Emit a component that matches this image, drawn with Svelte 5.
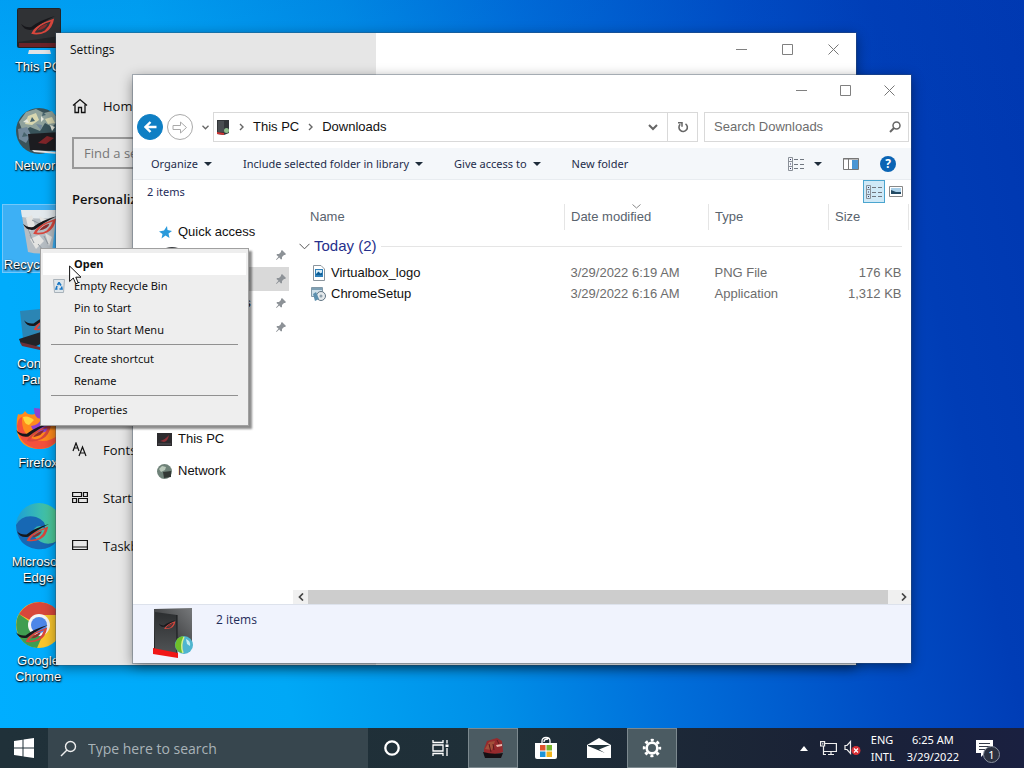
<script>
  const desktop = [
    { label: 'This PC', icon: 'pc' },
    { label: 'Network', icon: 'globe' },
    { label: 'Recycle Bin', icon: 'bin', selected: true },
    { label: 'Control Panel', icon: 'panel' },
    { label: 'Firefox', icon: 'firefox' },
    { label: 'Microsoft Edge', icon: 'edge' },
    { label: 'Google Chrome', icon: 'chrome' },
  ];
  const settingsNav = [
    { label: 'Fonts', icon: 'fonts' },
    { label: 'Start', icon: 'start' },
    { label: 'Taskbar', icon: 'taskbar' },
  ];
  const commands = [
    { label: 'Organize', menu: true },
    { label: 'Include selected folder in library', menu: true },
    { label: 'Give access to', menu: true },
    { label: 'New folder', menu: false },
  ];
  const pinned = [
    { label: 'Desktop', active: false },
    { label: 'Downloads', active: true },
    { label: 'Documents', active: false },
    { label: 'Pictures', active: false },
  ];
  const files = [
    { name: 'Virtualbox_logo', date: '3/29/2022 6:19 AM', type: 'PNG File', size: '176 KB', icon: 'image' },
    { name: 'ChromeSetup', date: '3/29/2022 6:16 AM', type: 'Application', size: '1,312 KB', icon: 'setup' },
  ];
  const menu = [
    [
      { label: 'Open', primary: true },
      { label: 'Empty Recycle Bin', icon: true },
      { label: 'Pin to Start' },
      { label: 'Pin to Start Menu' },
    ],
    [{ label: 'Create shortcut' }, { label: 'Rename' }],
    [{ label: 'Properties' }],
  ];
</script>

{#snippet rogEye(x, y, s)}
  <g transform="translate({x} {y}) scale({s})">
    <path d="M12 21Q16 12 26 8L39 3Q37 15 29 19Q21 23 12 21ZM16 19.5Q24 20 28 17Q33 13 35 6.500Q22 10 16 19.500Z" fill="#d8463c" fill-rule="evenodd" />
    <path d="M0 9Q5 14 12 13Q22 5 40 0Q24 8 14 16Q4 18 0 9Z" fill="#17171b" />
    <path d="M19 17Q23 11 31 9Q30 15 19 17Z" fill="#8d2c2c" />
  </g>
{/snippet}

{#snippet caption()}
  <div class="caption">
    <button aria-label="Minimize"><svg width="11" height="11" viewBox="0 0 11 11"><path d="M0 5.5H11" stroke="#808080" /></svg></button>
    <button aria-label="Maximize"><svg width="11" height="11" viewBox="0 0 11 11"><path d="M.5.5H10.5V10.5H.5Z" fill="none" stroke="#808080" /></svg></button>
    <button aria-label="Close"><svg width="11" height="11" viewBox="0 0 11 11"><path d="M.5.5L10.5 10.5M10.5.5L.5 10.5" stroke="#777" /></svg></button>
  </div>
{/snippet}

{#snippet detailsIcon()}
  <svg width="17" height="14" viewBox="0 0 17 14" fill="none">
    <path d="M.5.5H4.5V13.5H.5ZM.5 4.5H4.5M.5 9.5H4.5" stroke="#8a9098" />
    <path d="M2 2.5H3M2 7H3M2 11.5H3" stroke="#336" />
    <path d="M6 2.5H10M12 2.5H16M6 7.5H10M12 7.5H16M6 11.5H10M12 11.5H16" stroke="#707780" />
  </svg>
{/snippet}

<div class="screen">
  <main class="desktop">
    <ul class="icons">
      {#each desktop as d}
        <li>
          <button class="shortcut" class:selected={d.selected}>
            <svg width="48" height="48" viewBox="0 0 48 48">
              {#if d.icon === 'pc'}
                <path d="M15 42H36L37 46H14Z" fill="#dfe3e6" />
                <rect x="3" y="0" width="44" height="40" rx="2" fill="#222427" />
                <path d="M4 1H46V28L4 34Z" fill="#303235" />
                <rect x="5" y="35" width="40" height="4" fill="#6c2429" />
                {@render rogEye(7, 8, 0.85)}
              {:else if d.icon === 'globe'}
                <circle cx="25" cy="24" r="23" fill="#39535a" />
                <path d="M5 15L12 5L22 2L30 6L38 4L45 13L38 20L31 16L26 24L16 20L9 25Z" fill="#8fa29c" />
                <path d="M14 9L22 6L25 13L18 18L11 17ZM31 12L38 10L41 16L34 17Z" fill="#d8d7b0" />
                <path d="M9 15L13 12L15 16ZM27 9L30 12L27 15ZM36 18L41 20L38 24Z" fill="#e6e9dd" />
                <path d="M4 22L13 20L17 28L12 36L5 32ZM22 17L28 18L27 23Z" fill="#71889a" />
                <path d="M18 10L21 14L16 15ZM29 5L32 8L28 9ZM10 25L14 29L8 30Z" fill="#46636c" />
                <path d="M14 27L47 25L47 44L16 43Z" fill="#1c1c20" />
                <path d="M18 43L44 45V47L20 45Z" fill="#e5e5e5" />
                <path d="M24 36L33 29L40 31L32 37Z" fill="#7f2529" />
              {:else if d.icon === 'bin'}
                <path d="M7 4H43L38 46Q26 49 14 46Z" fill="#b6bdc3" />
                <path d="M7 4H43L42 11Q25 14 8 11Z" fill="#e3e9ed" />
                <path d="M12 12L18 9L21 20L15 26ZM25 10L33 14L29 22ZM16 33L25 29L30 35L22 43ZM31 27L38 31L35 40Z" fill="#e4e4e2" />
                <path d="M18 14L26 18M30 30L34 38M16 29L20 37M24 38L29 44M13 20L17 30" stroke="#8f979e" />
                {@render rogEye(9, 10, 0.85)}
              {:else if d.icon === 'panel'}
                <path d="M6 6L46 2V30L9 34Z" fill="#2b85b4" />
                <path d="M5 34L30 26L46 30L20 42L7 39Z" fill="#222328" />
                <path d="M6 37L26 42V45L8 41Z" fill="#6b3039" />
                {@render rogEye(10, 8, 0.8)}
              {:else if d.icon === 'firefox'}
                <path d="M4 10Q8 12 11 7Q14 12 21 10Q31 1 43 11Q50 20 46 32Q40 46 23 45Q5 43 3 27Q2 16 4 10Z" fill="#ff8a1c" />
                <path d="M3 22Q5 42 24 45Q41 45 46 30Q32 41 20 35Q7 31 8 13Q4 14 3 22Z" fill="#f4503c" />
                <path d="M20 4Q31 4 36 12Q40 23 31 28Q20 31 17 22Q25 21 27 15Q20 15 20 4Z" fill="#8e43d0" />
                <path d="M9 13Q14 11 20 16L15 21Q10 20 9 13Z" fill="#ffd43c" />
                {@render rogEye(2, 18, 0.9)}
              {:else if d.icon === 'edge'}
                <defs>
                  <linearGradient id="edgeTop" x1="0" x2="1"><stop offset="0" stop-color="#1c9fd8" /><stop offset="1" stop-color="#58d58a" /></linearGradient>
                </defs>
                <circle cx="25" cy="23" r="23" fill="url(#edgeTop)" />
                <path d="M2 22Q8 11 22 14Q33 18 31 26Q25 20 20 26Q17 34 27 39Q35 43 43 38Q35 48 22 46Q3 43 2 22Z" fill="#1768b4" />
                {@render rogEye(3, 21, 0.8)}
              {:else}
                <circle cx="25" cy="23" r="23" fill="#f9c62c" />
                <path d="M25 23L5 12Q13 0 26 0Q40 1 46 13H26Z" fill="#d8473b" />
                <path d="M5 12Q-1 23 6 36Q12 45 23 46L30 30Z" fill="#3f9d50" />
                <circle cx="25" cy="23" r="11" fill="#f5f5f5" />
                <circle cx="25" cy="23" r="8" fill="#4d86e8" />
                {@render rogEye(2, 23, 0.8)}
              {/if}
            </svg>
            <span>{d.label}</span>
          </button>
        </li>
      {/each}
    </ul>

    <section class="window settings" aria-label="Settings">
      <div class="pane">
        <h1>Settings</h1>
        <a class="nav home" href="#home">
          <svg width="16" height="16" viewBox="0 0 16 16" fill="none"><path d="M1 7.5L8 1.5L15 7.5M3 6.5V14.5H6.5V9.5H9.5V14.5H13V6.5" stroke="#111" stroke-width="1.3" /></svg>
          Home
        </a>
        <input class="find" aria-label="Find a setting" placeholder="Find a setting" />
        <h2>Personalization</h2>
        <nav class="rest">
          {#each settingsNav as n}
            <a class="nav" href="#{n.icon}">
              <svg width="16" height="16" viewBox="0 0 16 16" fill="none" stroke="#111" stroke-width="1.2">
                {#if n.icon === 'fonts'}
                  <path d="M1 9L4 1L7 9M2 6H6M7 14L10.5 5L14 14M8 11H13" />
                {:else if n.icon === 'start'}
                  <path d="M.6 2.5H9.5V6.5H.6ZM11.5 2.5H15.4V6.5H11.5ZM.6 8.5H4.5V12.5H.6ZM6.5 8.5H15.4V12.5H6.5Z" />
                {:else}
                  <path d="M.6 2.5H15.4V11.5H.6ZM.6 9H15.4" />
                {/if}
              </svg>
              {n.label}
            </a>
          {/each}
        </nav>
      </div>
      <div class="content">{@render caption()}</div>
    </section>

    <section class="window explorer" aria-label="Downloads">
      {@render caption()}
      <div class="address">
        <button class="round back" aria-label="Back"><svg width="13" height="12" viewBox="0 0 13 12" fill="none"><path d="M12.5 6H1.5M6.5 1L1.5 6L6.5 11" stroke="#fff" stroke-width="2.4" /></svg></button>
        <button class="round" aria-label="Forward"><svg width="16" height="13" viewBox="0 0 16 13" fill="none"><path d="M1 4.5H8.5V1L14.5 6.5L8.5 12V8.5H1Z" stroke="#aaa" /></svg></button>
        <button class="recent" aria-label="Recent locations"><svg width="7" height="5" viewBox="0 0 7 5" fill="none"><path d="M.5.8L3.5 3.8L6.5.8" stroke="#666" stroke-width="1.3" /></svg></button>
        <div class="crumbs">
          <svg width="14" height="17" viewBox="0 0 14 17"><path d="M1 1H13V14L8 16L1 15Z" fill="#333639" /><path d="M2 2H8V13H2Z" fill="#4a4e51" /><path d="M1 13L8 14V16L1 15Z" fill="#c33" /><circle cx="10.5" cy="11.5" r="2.5" fill="#8fbf8d" /></svg>
          <svg width="5" height="8" viewBox="0 0 5 8" fill="none"><path d="M1 1L4 4L1 7" stroke="#666" stroke-width="1.4" /></svg>
          <a href="#thispc">This PC</a>
          <svg width="5" height="8" viewBox="0 0 5 8" fill="none"><path d="M1 1L4 4L1 7" stroke="#666" stroke-width="1.4" /></svg>
          <a href="#downloads">Downloads</a>
          <button class="drop" aria-label="Previous locations"><svg width="10" height="7" viewBox="0 0 10 7" fill="none"><path d="M1 1L5 5L9 1" stroke="#666" stroke-width="2" /></svg></button>
          <button class="refresh" aria-label="Refresh"><svg width="12" height="12" viewBox="0 0 12 12" fill="none"><path d="M8.500 2.800A4.200 4.200 0 1 1 3.200 3.300" stroke="#666" stroke-width="1.600" /><path d="M1 1.800H5V5.800" stroke="#666" stroke-width="1.500" /></svg></button>
        </div>
        <label class="search">
          <input aria-label="Search Downloads" placeholder="Search Downloads" />
          <svg width="12" height="12" viewBox="0 0 12 12" fill="none"><circle cx="7.5" cy="4.5" r="3.5" stroke="#666" stroke-width="1.5" /><path d="M5 7L1 11" stroke="#666" stroke-width="2" /></svg>
        </label>
      </div>
      <div class="toolbar">
        {#each commands as c}
          <button>{c.label}{#if c.menu}<i class="tri"></i>{/if}</button>
        {/each}
        <button class="push" aria-label="Change view">{@render detailsIcon()}<i class="tri"></i></button>
        <button aria-label="Preview pane"><svg width="16" height="12" viewBox="0 0 16 12"><path d="M.5.5H15.5V11.5H.5Z" fill="#fff" stroke="#777" /><path d="M0 1H16M5.5 1V12" stroke="#777" /><path d="M9 2H15V11H9Z" fill="#4b96d4" /></svg></button>
        <button class="help" aria-label="Help">?</button>
      </div>
      <div class="summary">
        <span>2 items</span>
        <button class="view on" aria-label="Details view">{@render detailsIcon()}</button>
        <button class="view" aria-label="Thumbnail view"><svg width="14" height="11" viewBox="0 0 14 11"><path d="M.5.5H13.5V10.5H.5Z" fill="#fff" stroke="#888" /><path d="M2 2H12V8H2Z" fill="#a9cfe8" /><path d="M2 4L7 6H12V8H2Z" fill="#234a63" /></svg></button>
      </div>
      <div class="body">
        <nav class="tree">
          <a class="root" href="#quick"><svg width="13" height="13" viewBox="0 0 13 13"><path d="M8 0L8.5 4L13 5L9.5 7.5L10.5 12L6.5 9.5L2.5 12.5L3.5 8L0 5.5L5 4.5Z" fill="#2a9adb" /></svg>Quick access</a>
          {#each pinned as p}
            <a class="pin" class:active={p.active} href="#{p.label}">
              <svg width="15" height="17" viewBox="0 0 15 17"><path d="M2 1Q8 -1 14 1V14L8 16H2Z" fill="#3a3d40" /></svg>
              <span>{p.label}</span>
              <svg width="10" height="10" viewBox="0 0 10 10"><path d="M6 0L10 4L9 5H8L6 7V9L5 9.5L3.2 7.5L.5 10L0 9.5L2.5 6.8L.5 5L1 4H3L5 2V1Z" fill="#8d9297" /></svg>
            </a>
          {/each}
          <div class="lower">
            <a class="root" href="#pc"><svg width="15" height="15" viewBox="0 0 15 15"><path d="M0 1H15V14H0Z" fill="#2c2b2e" /><path d="M3 9Q8 8 12 3Q11 9 7 10Z" fill="#8f3138" /><path d="M1 12H14" stroke="#56565a" /></svg>This PC</a>
            <a class="root" href="#network"><svg width="15" height="15" viewBox="0 0 15 15"><circle cx="7.5" cy="7.5" r="7.5" fill="#6f8279" /><path d="M2 5L5 2L9 3L8 6L4 8Z" fill="#b9c8ba" /><path d="M6 8L14 7V13L7 14Z" fill="#333936" /></svg>Network</a>
          </div>
        </nav>
        <div class="list">
          <table>
            <colgroup><col /><col class="c-date" /><col class="c-type" /><col class="c-size" /></colgroup>
            <thead>
              <tr><th>Name</th><th>Date modified<svg class="sort" width="9" height="5" viewBox="0 0 9 5" fill="none"><path d="M.5.5L4.5 4L8.5.5" stroke="#888" /></svg></th><th>Type</th><th>Size</th></tr>
            </thead>
            <tbody>
              <tr class="group"><td colspan="4"><div><svg width="11" height="7" viewBox="0 0 11 7" fill="none"><path d="M.5.8L5.5 5.8L10.5.8" stroke="#555" /></svg>Today (2)</div></td></tr>
              {#each files as f}
                <tr>
                  <td>
                    <div class="name">
                      {#if f.icon === 'image'}
                        <svg width="15" height="16" viewBox="0 0 15 16"><path d="M2.5.5H10L13.5 4V15.5H2.5Z" fill="#fff" stroke="#8a949c" /><path d="M4 4H12V12H4Z" fill="#2f7fb8" /><path d="M5 5H11V8L9.500 9L7.500 7.500L5 10Z" fill="#d5ebf7" /><path d="M6 8L7.500 6.500L9.500 8.500L11 7.500V10H5V9Z" fill="#0c5c94" /></svg>
                      {:else}
                        <svg width="15" height="16" viewBox="0 0 15 16"><path d="M.5 1.5H11.5V10.5H.5Z" fill="#cfe0ea" stroke="#8299a8" /><path d="M1 2H11V4H1Z" fill="#7fa0b4" /><circle cx="10" cy="10" r="4.5" fill="#e4e9ec" stroke="#607482" /><path d="M2 8L5 6L8 13L4 15Z" fill="#5c8fae" /><circle cx="10" cy="10" r="1.5" fill="#8fa0ac" /></svg>
                      {/if}
                      {f.name}
                    </div>
                  </td>
                  <td>{f.date}</td><td>{f.type}</td><td>{f.size}</td>
                </tr>
              {/each}
            </tbody>
          </table>
          <div class="hscroll">
            <button aria-label="Scroll left"><svg width="6" height="8" viewBox="0 0 6 8" fill="none"><path d="M5 .5L1.5 4L5 7.5" stroke="#444" stroke-width="1.7" /></svg></button>
            <div class="thumb"></div>
            <button aria-label="Scroll right"><svg width="6" height="8" viewBox="0 0 6 8" fill="none"><path d="M1 .5L4.5 4L1 7.5" stroke="#444" stroke-width="1.7" /></svg></button>
          </div>
        </div>
      </div>
      <footer class="details">
        <svg width="40" height="50" viewBox="0 0 40 50">
          <defs><linearGradient id="tower" x1="0" y1="1" x2="1" y2="0"><stop offset="0" stop-color="#1c1d1f" /><stop offset="1" stop-color="#77797b" /></linearGradient><linearGradient id="side" x1="0" y1="0" x2="0" y2="1"><stop offset="0" stop-color="#2c2e30" /><stop offset="1" stop-color="#515456" /></linearGradient></defs>
          <path d="M1 1L39 0V40H24L1 44Z" fill="url(#tower)" /><path d="M2 4L24 7V46L2 42Z" fill="url(#side)" /><path d="M24 7V46" stroke="#17191a" />
          <path d="M0 40L25 45V50L0 46Z" fill="#f01616" />
          {@render rogEye(6, 12, 0.42)}
          <circle cx="31" cy="37" r="9" fill="#4fb5cf" /><path d="M24 31Q29 27 31 29Q27 37 30 45Q23 44 22 37Z" fill="#6fbf2a" /><path d="M31 29Q27 37 30 45" stroke="#d6f08c" stroke-width="1.5" fill="none" /><path d="M33 31Q38 33 37 38L34 36Z" fill="#c6eef2" />
        </svg>
        <span>2 items</span>
      </footer>
    </section>

    <div class="menu" role="menu">
      {#each menu as group, g}
        {#if g}<hr />{/if}
        {#each group as m}
          <button role="menuitem" class:primary={m.primary}>
            <span class="glyph">
              {#if m.icon}<svg width="12" height="14" viewBox="0 0 12 14"><path d="M.5.5H11.5L10.5 13.5H1.5Z" fill="#dfe6ea" stroke="#a8b2ba" /><path d="M6 3.5L8 6.5M8.5 7.5L9 10H6.5M4.5 10H3L4 7M4.5 6L6 3.5" stroke="#1976c4" stroke-width="1.6" fill="none" /></svg>{/if}
            </span>
            {m.label}
          </button>
        {/each}
      {/each}
    </div>

    <svg class="cursor" width="13" height="20" viewBox="0 0 13 20"><path d="M.6 1V16.5L4.3 13L6.8 18.8L9.2 17.8L6.8 12.2H12Z" fill="#fff" stroke="#111" /></svg>
  </main>

  <footer class="taskbar">
    <button class="winkey" aria-label="Start"><svg width="20" height="20" viewBox="0 0 20 20" fill="#fff"><path d="M0 3L8.5 1.7V9.5H0ZM9.5 1.5L20 0V9.5H9.5ZM0 10.5H8.5V18.3L0 17ZM9.5 10.5H20V20L9.5 18.5Z" /></svg></button>
    <label class="tsearch">
      <svg width="17" height="17" viewBox="0 0 17 17" fill="none" stroke="#eee" stroke-width="1.4"><circle cx="10.5" cy="6.5" r="5" /><path d="M7 10L1 16" /></svg>
      <input aria-label="Type here to search" placeholder="Type here to search" />
    </label>
    <button class="sys" aria-label="Cortana"><svg width="16" height="16" viewBox="0 0 16 16"><circle cx="8" cy="8" r="6.7" fill="none" stroke="#fff" stroke-width="2.3" /></svg></button>
    <button class="sys" aria-label="Task view"><svg width="17" height="16" viewBox="0 0 17 16" fill="none" stroke="#fff" stroke-width="1.3"><path d="M1 0V2.5H11V0M1 16V13.5H11V16M1 5H11V11H1ZM15 0V3.5M15 8V16" /><path d="M13.5 4.5H16.5V7H13.5Z" fill="#fff" stroke="none" /></svg></button>
    <button class="app open" aria-label="Explorer"><svg width="24" height="24" viewBox="0 0 24 24"><path d="M3 13L6 5L16 2L21 5L22 16L12 19L3 18Z" fill="#962a2d" /><path d="M4 13L8 6L14 5L11 14Z" fill="#a2503a" /><path d="M2 16Q12 19 22 17L20 22L4 22Z" fill="#161014" /><path d="M15 9L21 8V10L16 11Z" fill="#e9b8b0" /><path d="M8 8L10 16M12 8L13 14M16 4L18 8" stroke="#5a1a1c" /></svg></button>
    <button class="app" aria-label="Store"><svg width="24" height="24" viewBox="0 0 24 24"><path d="M8 7V5Q8 1.5 12 1.5Q16 1.5 16 5V7M10 6Q10 3 14 3" fill="none" stroke="#fff" stroke-width="1.3" /><path d="M1 7H23V21Q23 23 21 23H3Q1 23 1 21Z" fill="#fff" /><path d="M6 9H11.5V14.5H6Z" fill="#e0542c" /><path d="M12.5 9H18V14.5H12.5Z" fill="#78b52c" /><path d="M6 15.5H11.5V21H6Z" fill="#1d94d8" /><path d="M12.5 15.5H18V21H12.5Z" fill="#f0b51e" /></svg></button>
    <button class="app" aria-label="Mail"><svg width="24" height="20" viewBox="0 0 24 20"><path d="M0 7L12 0L24 7V20H0Z" fill="#fff" /><path d="M1 7H23L12 11.5L18 15L1 8Z" fill="#22333b" /></svg></button>
    <button class="app open" aria-label="Settings"><svg width="20" height="20" viewBox="0 0 20 20" fill="none" stroke="#fff"><circle cx="10" cy="10" r="5.3" stroke-width="2.6" /><circle cx="10" cy="10" r="7.8" stroke-width="2.8" stroke-dasharray="3 3.126" stroke-dashoffset="1.5" /></svg></button>
    <div class="tray">
      <button class="arrow" aria-label="Show hidden icons"><svg width="8" height="5" viewBox="0 0 8 5"><path d="M4 0L8 5H0Z" fill="#fff" /></svg></button>
      <svg width="17" height="15" viewBox="0 0 17 15" fill="none" stroke="#eee" stroke-width="1.2"><path d="M5 2.5H16.4V10.5H3.5V6M8 13.5H14M11 10.5V13.5M.6.6H4.6V5H.6ZM2 2.8H3.5M3.5 5V13.5H6" /></svg>
      <svg width="17" height="16" viewBox="0 0 17 16" fill="none"><path d="M1 5.5H3L6.5 1.5V13.5L3 9.5H1Z" stroke="#eee" stroke-width="1.2" /><circle cx="12" cy="10.5" r="4.5" fill="#d92f35" /><path d="M10 8.5L14 12.5M14 8.5L10 12.5" stroke="#fff" stroke-width="1.2" /></svg>
      <div class="pair"><span>ENG</span><span>INTL</span></div>
      <div class="pair clock"><span>6:25 AM</span><span>3/29/2022</span></div>
      <button class="note" aria-label="Notifications">
        <svg width="17" height="17" viewBox="0 0 17 17"><path d="M0 0H17V13H9L5 17V13H0Z" fill="#fff" /><path d="M3 3.5H14M3 6.5H14M3 9.5H9" stroke="#333a48" stroke-width="1.2" /></svg>
        <span>1</span>
      </button>
    </div>
  </footer>
</div>

<style>
  :global(body) { margin: 0; }
  .screen { min-height: 100vh; display: flex; flex-direction: column; font: 12px/16px "Open Sans", "Noto Sans", sans-serif; color: #111; overflow: hidden; }
  button, input { font: inherit; color: inherit; border: 0; padding: 0; margin: 0; background: none; outline: none; }
  a { color: inherit; text-decoration: none; }
  svg { display: block; flex: none; }
  .desktop {
    position: relative; flex: 1; min-height: 728px; overflow: hidden;
    background:
      linear-gradient(180deg, rgba(0, 70, 190, .12), transparent 20%),
      linear-gradient(78deg, #00aeff 0%, #00a8f6 25%, #0090e8 42%, #006fda 57%, #004cc4 76%, #003db6 87%, #0037b0 100%);
  }
  .icons { list-style: none; margin: 0; padding: 6px 2px; width: 72px; }
  .icons li { height: 99px; }
  .shortcut { display: flex; flex-direction: column; align-items: center; gap: 3px; width: 100%; padding: 2px 0 0; font: 13px/16px "Liberation Sans", Arial, sans-serif; color: #fff; text-shadow: 1px 1px 2px #000, 0 1px 1px #123; }
  .shortcut.selected { background: #3db0f5; box-shadow: inset 0 0 0 1px #72c8fa; white-space: nowrap; }

  .window { position: absolute; display: flex; background: #fff; box-shadow: 0 0 0 1px rgba(60, 80, 100, .35), 0 3px 12px rgba(0, 0, 0, .45); }
  .caption { display: flex; justify-content: flex-end; }
  .caption button { width: 46px; height: 32px; display: grid; place-items: center; }
  .settings { left: 56px; top: 33px; width: 800px; height: 632px; }
  .settings .content { flex: 1; }
  .settings .pane { width: 320px; background: #e6e6e6; }
  .settings h1 { margin: 0; padding: 9px 14px 7px; font-size: 12px; font-weight: 400; }
  .nav { display: flex; align-items: center; gap: 15px; height: 48px; padding-left: 16px; font-size: 13px; }
  .home { margin-top: 17px; }
  .find { box-sizing: border-box; width: 288px; height: 32px; margin: 7px 16px 0; padding: 0 10px; border: 2px solid #999; font-size: 13px; display: block; }
  .find::placeholder { color: #777; opacity: 1; }
  .settings h2 { margin: 20px 16px 0; font-size: 13px; line-height: 20px; font-weight: 600; }
  .rest { padding-top: 217px; }

  .explorer { left: 133px; top: 75px; width: 778px; height: 588px; flex-direction: column; font-family: "Liberation Sans", Arial, sans-serif; font-size: 13px; }
  .explorer .caption { padding-bottom: 7px; }
  .explorer .caption button { width: 44px; height: 30px; }
  .address { display: flex; align-items: center; height: 30px; padding: 0 2px 0 4px; }
  .round { box-sizing: border-box; width: 26px; height: 26px; border: 1px solid #aaa; border-radius: 50%; display: grid; place-items: center; margin-right: 4px; }
  .round.back { background: #0f7fc4; border-color: #0f7fc4; }
  .recent { width: 16px; display: grid; place-items: center; }
  .crumbs { flex: 1; box-sizing: border-box; height: 30px; border: 1px solid #d9d9d9; display: flex; align-items: center; gap: 9px; padding-left: 2px; }
  .drop { margin-left: auto; }
  .refresh { height: 100%; width: 30px; border-left: 1px solid #d9d9d9; display: grid; place-items: center; }
  .search { box-sizing: border-box; width: 205px; height: 30px; margin-left: 6px; border: 1px solid #d9d9d9; display: flex; align-items: center; padding: 0 7px 0 9px; }
  .search input { flex: 1; min-width: 0; }
  .search input::placeholder { color: #6d6d6d; opacity: 1; }
  .toolbar { display: flex; align-items: center; height: 32px; margin-top: 6px; padding: 0 15px 0 18px; gap: 31px; background: #f4f7fa; border-bottom: 1px solid #e8ecf0; font: 11px/16px "Noto Sans", sans-serif; color: #1e2c4a; box-sizing: border-box; }
  .toolbar button { display: flex; align-items: center; gap: 6px; white-space: nowrap; }
  .toolbar .push { margin-left: auto; gap: 9px; }
  .tri { border: 4px solid transparent; border-top-color: #1e2c3a; border-bottom: 0; }
  .toolbar .push ~ button { margin-left: -10px; }
  .toolbar .help { width: 16px; height: 16px; border-radius: 50%; background: #0a64b4; color: #fff; justify-content: center; font-size: 12px; font-weight: 700; }
  .summary { display: flex; height: 24px; padding: 0 4px 0 14px; font: 11px/24px "Noto Sans", sans-serif; color: #1e2c5a; }
  .summary span { flex: 1; }
  .view { width: 22px; height: 23px; display: grid; place-items: center; }
  .view.on { background: #cfe9f7; box-shadow: inset 0 0 0 1px #4ba5cf; }
  .body { flex: 1; display: flex; min-height: 0; }
  .tree { width: 160px; padding-top: 16px; }
  .tree a { display: flex; align-items: center; gap: 5px; height: 24px; padding-left: 24px; }
  .tree a.root { padding-left: 26px; gap: 6px; }
  .tree a.pin { padding: 0 3px 0 31px; margin-right: 4px; gap: 6px; }
  .tree .root + .pin { margin-top: -1px; }
  .tree .pin span { flex: 1; }
  .tree .active { background: #d9d9d9; }
  .lower { padding-top: 88px; display: grid; gap: 8px; }
  .tree .lower a.root { padding-left: 24px; }
  .list { flex: 1; display: flex; flex-direction: column; min-width: 0; }
  table { border-collapse: collapse; table-layout: fixed; margin: 0 2px 0 11px; }
  .c-date { width: 144px; } .c-type { width: 120px; } .c-size { width: 80px; }
  th { position: relative; height: 26px; padding: 0 6px; text-align: left; font-weight: 400; color: #59636e; border-right: 1px solid #e5e5e5; box-sizing: border-box; }
  .sort { position: absolute; left: 67px; top: 0; }
  td { height: 21px; padding: 0 6px; color: #6d6d6d; }
  td:first-child { padding-left: 7px; }
  td:last-child { padding-right: 7px; text-align: right; }
  .group td:first-child { height: 32px; padding: 0 7px 0 0; text-align: left; }
  .group div { display: flex; align-items: center; gap: 4px; font-size: 15px; line-height: 20px; color: #26308c; margin-left: -5px; }
  .group div::after { content: ""; flex: 1; height: 1px; background: #e5e5e5; }
  .name { display: flex; align-items: center; gap: 5px; color: #111; }
  .hscroll { margin-top: auto; height: 14px; display: flex; background: #f0f0f0; }
  .hscroll button { width: 15px; display: grid; place-items: center; }
  .thumb { flex: 1; margin-right: 8px; background: #cdcdcd; }
  .details { display: flex; gap: 23px; height: 59px; box-sizing: border-box; padding: 3px 20px; background: #f0f3fd; border-top: 1px solid #dde2ec; font: 12px/24px "Open Sans", sans-serif; color: #1e2c5a; }

  .menu { position: absolute; left: 40px; top: 248px; width: 209px; box-sizing: border-box; padding: 4px 2px; border: 1px solid #a0a0a0; background: #eee; box-shadow: 3px 3px 2px rgba(0, 0, 0, .45); font: 11px/16px "Noto Sans", sans-serif; }
  .menu button { display: flex; align-items: center; width: 100%; height: 22px; }
  .menu .glyph { width: 31px; display: grid; place-items: center; }
  .menu .primary { background: #fff; font-weight: 700; }
  .menu hr { border: 0; height: 1px; background: #909090; margin: 3px 8px; }
  .cursor { position: absolute; left: 69px; top: 265px; }

  .taskbar { display: flex; height: 40px; background: linear-gradient(90deg, #203139, #1f2f38 50%, #1a2236 80%, #1a2040); color: #fff; }
  .taskbar button { display: grid; place-items: center; }
  .winkey { width: 48px; }
  .tsearch { display: flex; align-items: center; gap: 11px; width: 308px; padding-left: 12px; background: #37464e; }
  .tsearch input { flex: 1; min-width: 0; font-size: 14px; padding-top: 2px; }
  .tsearch input::placeholder { color: #a9b3b8; opacity: 1; }
  .sys { width: 48px; }
  .app { width: 50px; margin-right: 3px; }
  .sys + .app { margin-left: 4px; }
  .open { background: #4b5b62; box-shadow: inset 0 0 0 1px #7c898f; }
  .tray { margin-left: auto; display: flex; align-items: center; gap: 7px; padding-right: 24px; font: 11px/17px "Noto Sans", sans-serif; }
  .tray .arrow { margin-right: 5px; }
  .pair { display: grid; margin-left: 3px; }
  .clock { text-align: center; margin-left: 5px; }
  .taskbar .note { position: relative; margin-left: 10px; width: 24px; justify-items: start; }
  .note span { position: absolute; left: 7px; top: 6px; width: 15px; height: 15px; border: 1px solid #8a92a0; border-radius: 50%; background: #2b3140; text-align: center; line-height: 15px; }
</style>
